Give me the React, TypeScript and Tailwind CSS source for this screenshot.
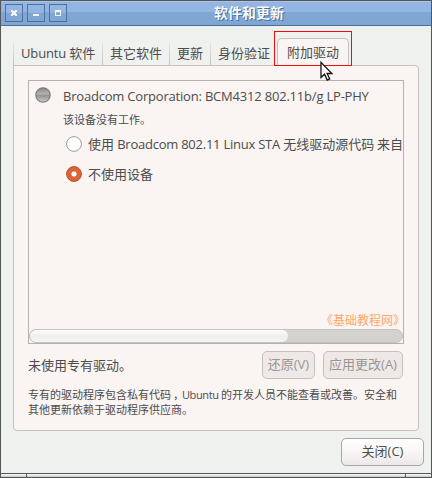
import React from 'react';

const CJK = "font-['Open_Sans','Noto_Sans_CJK_SC',sans-serif]";

function WindowButton({ children }: { children: React.ReactNode }) {
  return (
    <div className="h-[18px] w-[18px] border border-[#4b719e] bg-linear-to-b from-[#94b5e2] from-50% to-[#80a6d3] to-50%">
      <svg width="16" height="16" viewBox="0 0 16 16" shapeRendering="crispEdges">{children}</svg>
    </div>
  );
}

function Tab({ label, width }: { label: React.ReactNode; width: string }) {
  return (
    <div className={`relative h-[27px] shrink-0 pl-[8px] leading-[30px] ${width}`}>
      <span className="absolute top-[4px] left-0 h-[23px] w-px bg-linear-to-b from-[#e9e5e4] to-[#c6c1be]" />
      {label}
    </div>
  );
}

function Radio({ checked }: { checked?: boolean }) {
  return (
    <svg width="16" height="16" viewBox="0 0 16 16" className="shrink-0">
      <circle cx="8" cy="8" r="7.4" fill={checked ? '#dc6435' : '#fdfffe'} stroke={checked ? '#b94b25' : '#9c9c9a'} strokeWidth="1" />
      {checked && <circle cx="8" cy="8" r="3" fill="#fff" stroke="#c9572d" strokeWidth="0.6" />}
    </svg>
  );
}

export default function App() {
  return (
    <div className={`relative flex h-[478px] w-[432px] flex-col overflow-hidden border border-[#555657] bg-[#eff1ee] text-[13px] whitespace-nowrap text-[#4c4c4c] ${CJK}`}>
      <header className="relative flex h-[25px] shrink-0 items-start gap-[4px] border-b border-[#4b719e] bg-linear-to-b from-[#94b5e2] from-[11px] to-[#80a6d3] to-[11px] pt-[3px] pl-[4px] shadow-[inset_0_1px_0_#a9c4ea]">
        <WindowButton>
          <path d="M5 5h2v1h2V5h2v2h-1v2h1v2H9v-1H7v1H5V9h1V7H5z" fill="#f3f4f3" />
        </WindowButton>
        <WindowButton>
          <path d="M5 9h6v2H5z" fill="#f3f4f3" />
        </WindowButton>
        <WindowButton>
          <path d="M5 5h6v6H5zM6 7v3h4V7z" fill="#f3f4f3" fillRule="evenodd" />
        </WindowButton>
        <h1 className="ml-[143px] text-[14px] leading-[18px] font-bold text-[#f7f8f7] [text-shadow:1px_1px_0_#466c9a]">软件和更新</h1>
      </header>

      <nav className="ml-[12px] flex h-[39px] shrink-0 items-end">
        <Tab label={<span className="tracking-[-0.15px]">Ubuntu 软件</span>} width="w-[89px]" />
        <Tab label="其它软件" width="w-[67px]" />
        <Tab label="更新" width="w-[41px]" />
        <Tab label="身份验证" width="w-[67px]" />
        <div className="relative z-10 -mb-px h-[28px] w-[72px] shrink-0 rounded-t-[5px] border border-b-0 border-[#c6c1be] bg-[#faf4f2] pl-[9px] leading-[27px]">附加驱动</div>
      </nav>

      <main className="ml-[12px] flex h-[366px] w-[406px] shrink-0 flex-col rounded-tr-[4px] rounded-b-[4px] border border-[#c6c1be] bg-[#faf4f2] px-[14px] pt-[14px]">
        <section className="flex h-[264px] w-[376px] shrink-0 flex-col overflow-hidden border border-[#b5b1af]">
          <div className="flex h-[30px] items-center pl-[6px]">
            <svg width="16" height="16" viewBox="0 0 16 16" className="-mt-[2px]">
              <defs>
                <linearGradient id="led" x2="0" y2="1">
                  <stop offset="0" stopColor="#868686" />
                  <stop offset=".42" stopColor="#b2b2b2" />
                  <stop offset=".55" stopColor="#929292" />
                  <stop offset="1" stopColor="#d0d0d0" />
                </linearGradient>
              </defs>
              <circle cx="8" cy="8" r="7.2" fill="url(#led)" stroke="#7c7c7c" strokeWidth="1.2" />
            </svg>
            <span className="mt-[2px] ml-[12px] tracking-[-0.2px]">Broadcom Corporation: BCM4312 802.11b/g LP-PHY</span>
          </div>
          <p className="h-[18px] pl-[34px] text-[11px] leading-[17px]">该设备没有工作。</p>
          <label className="flex h-[30px] items-center gap-[6px] pl-[37px]">
            <Radio />
            <span className="mt-px">使用<span className="tracking-[-0.24px]"> Broadcom 802.11 Linux STA </span>无线驱动源代码<span className="tracking-[-0.6px]"> </span>来自</span>
          </label>
          <label className="flex h-[30px] items-center gap-[6px] pl-[37px]">
            <Radio checked />
            <span className="mt-px">不使用设备</span>
          </label>
          <div className="mt-auto mr-[-2px] self-end text-[12px] leading-[15px] text-[#ffa769]">《基础教程网》</div>
          <div className="mt-[1px] h-[14px] shrink-0 overflow-hidden rounded-[7px] border border-[#c5c3c1] bg-[#d3d2cf]">
            <div className="h-full w-[258px] rounded-full bg-linear-to-b from-white via-[#eeefed] to-[#f5f5f4]" />
          </div>
        </section>

        <div className="mt-[7px] flex h-[28px] shrink-0 items-center">
          <span className="mt-px flex-1">未使用专有驱动。</span>
          <button className="mr-[8px] h-[28px] w-[53px] rounded-[5px] border border-[#c5bfbd] bg-[#eee8e6] text-[#999694]">还原(V)</button>
          <button className="mr-px h-[28px] w-[80px] rounded-[5px] border border-[#c5bfbd] bg-[#eee8e6] text-[#999694]">应用更改(A)</button>
        </div>
        <p className="mt-[8px] text-[11px] leading-[15px]">
          专有的驱动程序包含私有代码<span className="relative left-[2px]">，</span><span className="tracking-[-0.4px]">Ubuntu </span>的开发人员不能查看或改善。安全和<br />
          其他更新依赖于驱动程序供应商。
        </p>
      </main>

      <button className="mt-[7px] mr-[7px] h-[28px] w-[83px] shrink-0 self-end rounded-[5px] border border-[#aaa6a4] bg-linear-to-b from-white via-[#f8f6f5] to-[#ece8e7]">关闭(C)</button>

      <footer className="mt-auto flex h-[4px] shrink-0 border-t border-[#555657] bg-linear-to-b from-white to-[#c9c9c7]">
        <span className="w-[26px] border-r border-[#555657]" />
        <span className="w-[379px] border-r border-[#555657]" />
      </footer>

      <div className="absolute top-[30px] left-[273px] z-20 h-[35px] w-[78px] border border-[#f20d0d]" />
      <svg className="absolute top-[60px] left-[319px] z-30" width="14" height="22" viewBox="0 0 14 22">
        <path d="M1 1.4V16.5l3.5-3.3 2.7 5.9 2.5-1.2-2.6-5.4h4.8z" fill="#fff" stroke="#111" strokeWidth="1.3" />
      </svg>
    </div>
  );
}
